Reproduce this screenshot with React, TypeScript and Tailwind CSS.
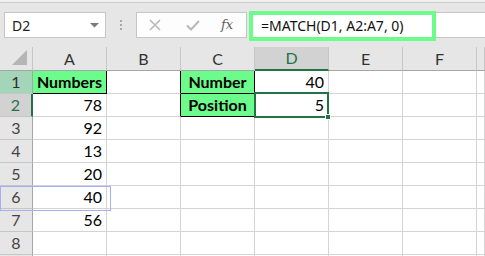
import type { ReactNode } from 'react'

type Cell = {
  text?: string
  bold?: boolean
  green?: boolean
  align?: 'left' | 'right' | 'center'
  extra?: string
  overlay?: ReactNode
}

const cols = ['A', 'B', 'C', 'D', 'E', 'F', 'G']

const data: Record<number, Record<string, Cell>> = {
  1: {
    A: { text: 'Numbers', bold: true, green: true, align: 'center', extra: 'border-r-black border-b-black' },
    B: { extra: 'border-r-black' },
    C: { text: 'Number', bold: true, green: true, align: 'center', extra: 'border-r-black border-b-black' },
    D: { text: '40', align: 'right' },
  },
  2: {
    A: { text: '78', align: 'right' },
    B: { extra: 'border-r-black' },
    C: { text: 'Position', bold: true, green: true, align: 'center', extra: 'border-r-black border-b-black' },
    D: {
      text: '5',
      align: 'right',
      overlay: (
        <>
          <span className="pointer-events-none absolute left-[-1px] top-[-2px] z-10 h-[26px] w-[75px] border-2 border-[#217346]" />
          <span className="pointer-events-none absolute left-[70px] top-[20px] z-20 h-[6px] w-[6px] border border-white bg-[#217346]" />
        </>
      ),
    },
  },
  3: { A: { text: '92', align: 'right' } },
  4: { A: { text: '13', align: 'right' } },
  5: { A: { text: '20', align: 'right' } },
  6: {
    A: {
      text: '40',
      align: 'right',
      overlay: (
        <span className="pointer-events-none absolute left-[-33px] top-0 z-10 h-[25px] w-[111px] border border-[#a7aff4]" />
      ),
    },
  },
  7: { A: { text: '56', align: 'right' } },
}

// row 9 only shows its top edge, so it carries no label
const rows = [1, 2, 3, 4, 5, 6, 7, 8, 9]

function RowHeader({ n }: { n: number }) {
  let cls = 'bg-[#e6e6e6] text-[#444] border-r border-r-[#a6a6a6]'
  if (n === 1) cls = 'bg-[#a3d6b9] text-[#3a2a2a] border-r border-r-[#a6a6a6]'
  if (n === 2) cls = 'bg-[#d2d2d2] text-[#217346] border-r-2 border-r-[#217346]'
  return (
    <div className={`flex h-[23px] items-center justify-center border-b border-b-[#c6c6c6] text-[16px] ${cls}`}>
      {n < 9 ? n : ''}
    </div>
  )
}

function DataCell({ cell }: { cell?: Cell }) {
  const c = cell ?? {}
  const align =
    c.align === 'right' ? 'justify-end pr-[4px]' : c.align === 'center' ? 'justify-center' : 'justify-start pl-[4px]'
  return (
    <div
      className={`relative flex h-[23px] items-center border-r border-b border-[#d4d4d4] text-[16px] text-black ${align} ${
        c.green ? 'bg-[#6cfc8c]' : 'bg-white'
      } ${c.bold ? 'font-bold' : ''} ${c.extra ?? ''}`}
    >
      {c.text}
      {c.overlay}
    </div>
  )
}

export default function App() {
  return (
    <div className="h-screen w-full overflow-hidden bg-white font-['Lato',sans-serif]">
      {/* toolbar / formula bar */}
      <div className="h-[47px] bg-[#e6e6e6]">
        <div className="h-[3px] border-b border-[#cdcdcd] bg-[#f0f0f0]" />
        <div className="mt-[9px] flex items-start font-['Noto_Sans',sans-serif]">
          <div className="ml-[4px] flex h-[26px] w-[102px] items-center justify-between border border-[#c6c6c6] bg-white pl-[7px] pr-[6px] text-[14px] text-[#222]">
            <span>D2</span>
            <svg width="9" height="5" viewBox="0 0 9 5">
              <polygon points="0,0 9,0 4.5,4.5" fill="#7a7a7a" />
            </svg>
          </div>
          <div className="flex h-[26px] w-[30px] flex-col items-center justify-center gap-[2px]">
            <span className="h-[2px] w-[2px] bg-[#a8a8a8]" />
            <span className="h-[2px] w-[2px] bg-[#a8a8a8]" />
            <span className="h-[2px] w-[2px] bg-[#a8a8a8]" />
          </div>
          <div className="flex h-[26px] w-[111px] items-center border border-[#c6c6c6] bg-[#fdfdfd]">
            <svg className="ml-[12px]" width="12" height="12" viewBox="0 0 12 12">
              <path d="M1 1 L11 11 M11 1 L1 11" stroke="#b9b9b9" strokeWidth="1.6" fill="none" />
            </svg>
            <svg className="ml-[25px]" width="14" height="11" viewBox="0 0 14 11">
              <path d="M1 5.5 L5 9.5 L13 1" stroke="#b9b9b9" strokeWidth="2" fill="none" />
            </svg>
            <span className="ml-[21px] font-['DejaVu_Serif',serif] text-[13px] italic text-[#5f5f5f]">fx</span>
          </div>
          <div className="relative ml-[2px] flex h-[26px] flex-1 items-center border-y border-[#c6c6c6] bg-white pl-[12px] text-[14px] text-[#111]">
            <span className="pointer-events-none absolute left-0 top-[-2px] h-[30px] w-[187px] border-4 border-[#6cfc8c]" />
            <span className="relative">=MATCH(D1, A2:A7, 0)</span>
          </div>
        </div>
      </div>

      {/* sheet grid */}
      <div className="grid grid-cols-[33px_74px_74px_74px_74px_74px_74px_1fr]">
        <div className="flex h-[24px] items-end justify-end border-r border-b border-r-[#c6c6c6] border-b-[#a6a6a6] bg-[#e6e6e6]">
          <svg width="18" height="18" viewBox="0 0 18 18" className="mb-[3px] mr-[3px]">
            <polygon points="16,1 16,16 1,16" fill="#b5b5b5" />
          </svg>
        </div>
        {cols.map((c) =>
          c === 'D' ? (
            <div
              key={c}
              className="flex h-[24px] items-center justify-center border-r border-b-2 border-r-[#c6c6c6] border-b-[#217346] bg-[#d2d2d2] text-[16px] text-[#217346]"
            >
              {c}
            </div>
          ) : (
            <div
              key={c}
              className="flex h-[24px] items-center justify-center border-r border-b border-r-[#c6c6c6] border-b-[#a6a6a6] bg-[#e6e6e6] text-[16px] text-[#333]"
            >
              {c === 'G' ? '' : c}
            </div>
          ),
        )}
        {rows.map((r) => (
          <div key={r} className="contents">
            <RowHeader n={r} />
            {cols.map((c) => (
              <DataCell key={c} cell={data[r]?.[c]} />
            ))}
          </div>
        ))}
      </div>
    </div>
  )
}
